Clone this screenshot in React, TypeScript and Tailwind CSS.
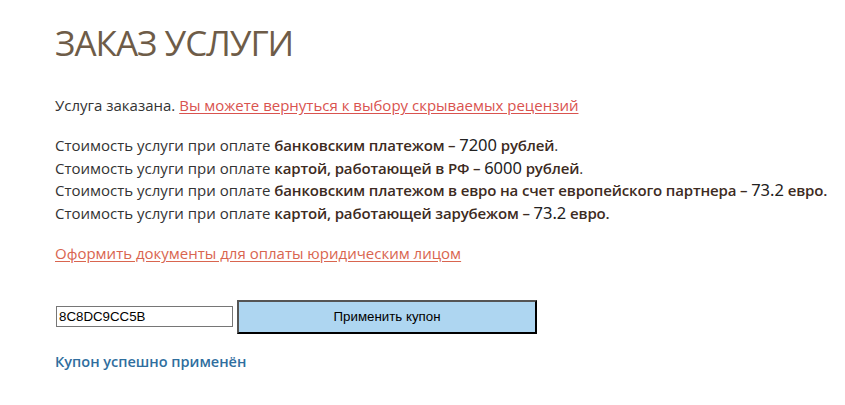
export default function App() {
  const font = { fontFamily: '"Open Sans", "Noto Sans", sans-serif' };
  const rows = [
    { bold: 'банковским платежом – ', num: '7200', tail: ' рублей', end: '.' },
    { bold: 'картой, работающей в РФ – ', num: '6000', tail: ' рублей', end: '.' },
    { bold: 'банковским платежом в евро на счет европейского партнера – ', num: '73.2', tail: ' евро.', end: '' },
    { bold: 'картой, работающей зарубежом – ', num: '73.2', tail: ' евро.', end: '' },
  ];

  return (
    <div className="min-h-[405px] bg-white pl-[55px] pt-[21px] text-[#333]" style={font}>
      <h1 className="text-[35px] font-medium leading-[44px] tracking-[-1px] text-[#6e5c48]">ЗАКАЗ УСЛУГИ</h1>

      <p className="mt-[29px] text-[15px] leading-[22px]">
        Услуга заказана.{' '}
        <a href="#" className="text-[#d9534f] underline underline-offset-2">
          Вы можете вернуться к выбору скрываемых рецензий
        </a>
      </p>

      <div className="mt-[18px] text-[15px] leading-[21.7px]">
        {rows.map((r, i) => (
          <div key={i}>
            Стоимость услуги при оплате{' '}
            <span className="font-semibold tracking-[-0.15px] text-[#3d2b22]">{r.bold}</span>
            <span className="text-[16.5px] text-[#222]" style={{ fontFamily: '"Noto Sans", sans-serif' }}>
              {r.num}
            </span>
            <span className="font-semibold tracking-[-0.15px] text-[#3d2b22]">{r.tail}</span>
            {r.end}
          </div>
        ))}
      </div>

      <p className="mt-[17px] text-[15px] leading-[22px]">
        <a href="#" className="text-[#d9654f] underline underline-offset-2">
          Оформить документы для оплаты юридическим лицом
        </a>
      </p>

      <div className="mt-[36px] flex items-center gap-[4px] pl-[1px]">
        <input
          defaultValue="8C8DC9CC5B"
          className="h-[21px] w-[177px] border border-[#767676] px-[2px] text-[13.3px] text-black outline-none"
          style={{ fontFamily: '"Liberation Sans", Arial, sans-serif' }}
        />
        <button
          className="h-[34px] w-[300px] border-2 border-t-[#555] border-l-[#555] border-r-black border-b-black bg-[#aed6f1] text-[13.3px] text-black"
          style={{ fontFamily: '"Liberation Sans", Arial, sans-serif' }}
        >
          Применить купон
        </button>
      </div>

      <p className="mt-[17px] text-[14.5px] font-semibold text-[#2f6e9e]">Купон успешно применён</p>
    </div>
  );
}
